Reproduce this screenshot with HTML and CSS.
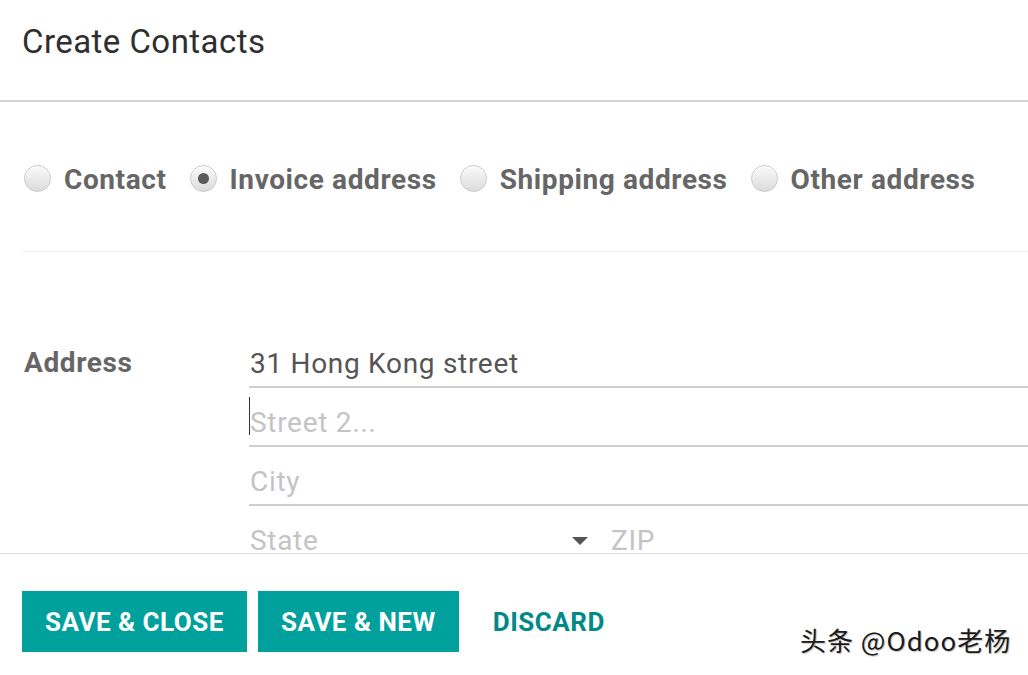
FILE: index.html
```html
<!DOCTYPE html>
<html>
<head>
<meta charset="utf-8">
<title>Create Contacts</title>
<link rel="stylesheet" href="styles.css">
</head>
<body>
<div class="modal">
  <header class="modal-header">
    <h1 class="title">Create Contacts</h1>
  </header>
  <main class="modal-body">
    <div class="type-row">
      <label class="radio"><span class="radio-dot"></span><span class="radio-label">Contact</span></label>
      <label class="radio"><span class="radio-dot checked"></span><span class="radio-label">Invoice address</span></label>
      <label class="radio"><span class="radio-dot"></span><span class="radio-label">Shipping address</span></label>
      <label class="radio"><span class="radio-dot"></span><span class="radio-label">Other address</span></label>
    </div>
    <div class="address-group">
      <div class="field-label">Address</div>
      <div class="fields">
        <div class="field"><span class="value">31 Hong Kong street</span></div>
        <div class="field"><span class="caret"></span><span class="placeholder">Street 2...</span></div>
        <div class="field"><span class="placeholder">City</span></div>
        <div class="field-row">
          <div class="field state"><span class="placeholder">State</span><span class="arrow"></span></div>
          <div class="field zip"><span class="placeholder">ZIP</span></div>
        </div>
      </div>
    </div>
  </main>
  <footer class="modal-footer">
    <button class="btn btn-primary">SAVE &amp; CLOSE</button>
    <button class="btn btn-primary">SAVE &amp; NEW</button>
    <button class="btn btn-link">DISCARD</button>
  </footer>
  <div class="watermark">头条 @Odoo老杨</div>
</div>
</body>
</html>
```
FILE: styles.css
```css
html, body {
  margin: 0;
  padding: 0;
  background: #fff;
}

body {
  font-family: Roboto, "Liberation Sans", sans-serif;
  color: #555;
}

.modal {
  position: relative;
  width: 1028px;
  height: 675px;
  display: flex;
  flex-direction: column;
  overflow: hidden;
}

.modal-header {
  height: 102px;
  box-sizing: border-box;
  padding: 0 0 0 22px;
  border-bottom: 2px solid #d4d4d4;
  display: flex;
  align-items: flex-start;
  flex-shrink: 0;
}

.title {
  margin: 22px 0 0 0;
  font-size: 33px;
  line-height: 40px;
  font-weight: 400;
  letter-spacing: 0.45px;
  color: #2f2f2f;
}

.modal-body {
  height: 451px;
  flex-shrink: 0;
  overflow: hidden;
  padding: 0 0 0 22px;
  box-sizing: border-box;
}

.type-row {
  display: flex;
  align-items: center;
  padding: 60px 0 56px 2px;
  border-bottom: 1px solid #efefef;
  gap: 23px;
}

.radio {
  display: flex;
  align-items: center;
  gap: 13px;
}

.radio-dot {
  width: 25px;
  height: 25px;
  border-radius: 50%;
  border: 1px solid #c9c9c9;
  background: linear-gradient(#fafafa, #dcdcdc);
  box-shadow: inset 0 1px 1px #fff;
  display: flex;
  align-items: center;
  justify-content: center;
}

.radio-dot.checked::after {
  content: "";
  width: 11px;
  height: 11px;
  border-radius: 50%;
  background: #5a5a5a;
}

.radio-label {
  font-size: 28px;
  font-weight: 700;
  letter-spacing: 0.6px;
  color: #666;
  line-height: 30px;
  padding-top: 3px;
}

.address-group {
  display: flex;
  margin-top: 77px;
}

.field-label {
  width: 225px;
  padding-left: 2px;
  font-size: 28px;
  font-weight: 700;
  letter-spacing: 0.6px;
  color: #666;
  line-height: 34px;
  padding-top: 17px;
}

.fields {
  flex: 1;
  display: flex;
  flex-direction: column;
}

.field {
  height: 57px;
  border-bottom: 2px solid #cfcfcf;
  display: flex;
  align-items: flex-end;
  position: relative;
  font-size: 28px;
  line-height: 34px;
  letter-spacing: 0.7px;
}

.field > span {
  margin-bottom: 5px;
}

.value {
  color: #555;
  padding-left: 1px;
}

.placeholder {
  color: #c4c4c4;
  padding-left: 1px;
}

.caret {
  position: absolute;
  left: 0;
  bottom: 5px;
  width: 1px;
  height: 38px;
  background: #333;
}

.field-row {
  display: flex;
  gap: 15px;
}

.field.state {
  width: 346px;
  justify-content: space-between;
}

.arrow {
  width: 0;
  height: 0;
  border-left: 8px solid transparent;
  border-right: 8px solid transparent;
  border-top: 8px solid #555;
  margin-bottom: 18px !important;
  margin-right: 7px;
}

.field.zip {
  flex: 1;
}

.modal-footer {
  flex: 1;
  border-top: 1px solid #dcdcdc;
  display: flex;
  align-items: flex-start;
  padding: 37px 0 0 22px;
  gap: 11px;
}

.btn {
  height: 61px;
  padding: 0 23px;
  border: none;
  font-family: Roboto, "Liberation Sans", sans-serif;
  font-size: 26px;
  font-weight: 700;
  letter-spacing: 0.5px;
  cursor: pointer;
}

.btn-primary {
  background: #00a09d;
  color: #fff;
}

.btn-link {
  background: transparent;
  color: #008a87;
}

.watermark {
  position: absolute;
  left: 800px;
  top: 624px;
  font-family: "Noto Sans CJK SC", sans-serif;
  font-size: 26px;
  line-height: 32px;
  font-weight: 400;
  letter-spacing: 1px;
  color: #1a1a1a;
  text-shadow: 1px 1px 1px rgba(0, 0, 0, 0.25);
}
```
